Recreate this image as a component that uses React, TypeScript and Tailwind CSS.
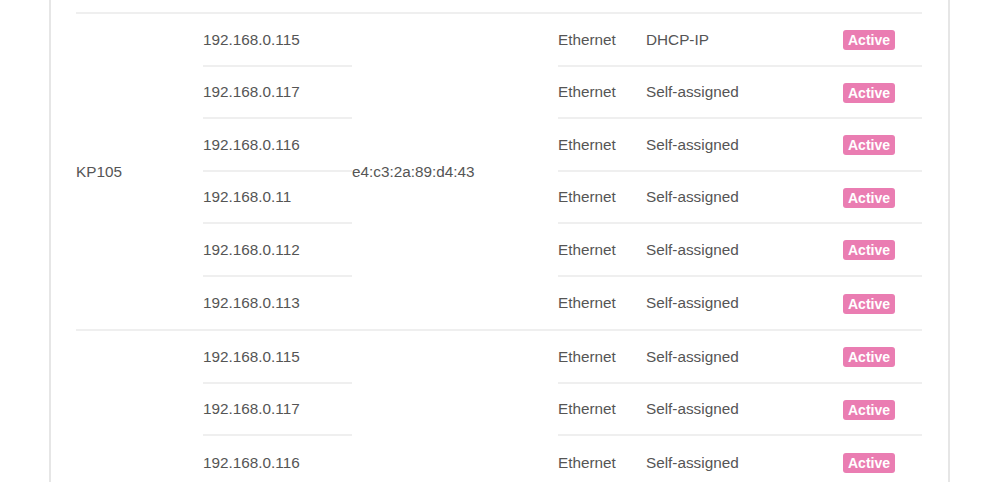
import React from "react";

type Row = { ip: string; type: string };

const group1: Row[] = [
  { ip: "192.168.0.115", type: "DHCP-IP" },
  { ip: "192.168.0.117", type: "Self-assigned" },
  { ip: "192.168.0.116", type: "Self-assigned" },
  { ip: "192.168.0.11", type: "Self-assigned" },
  { ip: "192.168.0.112", type: "Self-assigned" },
  { ip: "192.168.0.113", type: "Self-assigned" },
];

const group2: Row[] = [
  { ip: "192.168.0.115", type: "Self-assigned" },
  { ip: "192.168.0.117", type: "Self-assigned" },
  { ip: "192.168.0.116", type: "Self-assigned" },
];

function Group({ name, mac, rows }: { name: string; mac: string; rows: Row[] }) {
  return (
    <div className="flex border-b-2 border-[#efefef]">
      <div className="w-[127px] flex items-center pt-[2px]">{name}</div>
      <div className="w-[149px] flex flex-col">
        {rows.map((r, i) => (
          <div
            key={i}
            className={
              "h-[52.5px] flex items-center pt-[2px] " +
              (i < rows.length - 1 ? "border-b-2 border-[#efefef]" : "")
            }
          >
            {r.ip}
          </div>
        ))}
      </div>
      <div className="w-[206px] flex items-center pt-[2px]">{mac}</div>
      <div className="w-[364px] flex flex-col">
        {rows.map((r, i) => (
          <div
            key={i}
            className={
              "h-[52.5px] flex items-center pt-[2px] " +
              (i < rows.length - 1 ? "border-b-2 border-[#efefef]" : "")
            }
          >
            <div className="w-[88px]">Ethernet</div>
            <div className="w-[197px]">{r.type}</div>
            <div className="w-[79px] flex">
              <span className="bg-[#ea7db2] text-white font-bold text-[14px] leading-[20px] px-[5px] rounded-[3px]">
                Active
              </span>
            </div>
          </div>
        ))}
      </div>
    </div>
  );
}

export default function App() {
  return (
    <div
      className="w-[999px] h-[482px] bg-white overflow-hidden text-[15.3px] text-[#555555]"
      style={{ fontFamily: '"Liberation Sans", Arial, Helvetica, sans-serif' }}
    >
      <div className="ml-[49px] w-[901px] h-full border-x-2 border-[#e6e6e6] pl-[25px]">
        <div className="w-[846px]">
          <div className="h-[14px] border-b-2 border-[#efefef]" />
          <Group name="KP105" mac="e4:c3:2a:89:d4:43" rows={group1} />
          <Group name="" mac="" rows={group2} />
        </div>
      </div>
    </div>
  );
}
